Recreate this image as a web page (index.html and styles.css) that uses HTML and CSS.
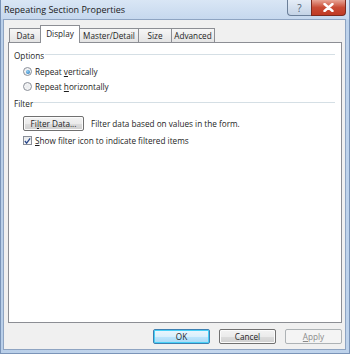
FILE: index.html
```html
<!DOCTYPE html>
<html>
<head>
<meta charset="utf-8">
<link rel="stylesheet" href="styles.css">
</head>
<body>
<div class="window">
  <div class="titlebar">
    <div class="title">Repeating Section Properties</div>
    <div class="caption-buttons">
      <div class="cap-btn help">?</div>
      <div class="cap-btn close">
        <svg width="11" height="9" viewBox="0 0 11 9"><path d="M1.5 1 L9.5 8 M9.5 1 L1.5 8" stroke="#fff" stroke-width="2.4" stroke-linecap="round"/></svg>
      </div>
    </div>
  </div>
  <div class="client">
    <div class="tabs">
      <div class="tab t-data">Data</div>
      <div class="tab active t-display">Display</div>
      <div class="tab t-master">Master/Detail</div>
      <div class="tab t-size">Size</div>
      <div class="tab t-adv">Advanced</div>
    </div>
    <div class="panel">
      <div class="group-head"><span>Options</span><div class="rule"></div></div>
      <div class="option"><span class="radio checked"></span><span>Repeat <u>v</u>ertically</span></div>
      <div class="option"><span class="radio"></span><span>Repeat <u>h</u>orizontally</span></div>
      <div class="group-head filter-head"><span>Filter</span><div class="rule"></div></div>
      <div class="filter-row">
        <div class="btn filter-btn">Fi<u>l</u>ter Data...</div>
        <span>Filter data based on values in the form.</span>
      </div>
      <div class="option check-row">
        <span class="checkbox"><svg width="8" height="8" viewBox="0 0 8 8"><path d="M1 4 L3 6.5 L7 1" stroke="#2c4a8c" stroke-width="1.5" fill="none"/></svg></span>
        <span><u>S</u>how filter icon to indicate filtered items</span>
      </div>
    </div>
    <div class="footer">
      <div class="btn default">OK</div>
      <div class="btn">Cancel</div>
      <div class="btn disabled"><u>A</u>pply</div>
    </div>
  </div>
</div>
</body>
</html>
```
FILE: styles.css
```css
* { box-sizing: border-box; }
html, body { margin: 0; padding: 0; }
body {
  width: 350px;
  height: 354px;
  font-family: "Open Sans", "Noto Sans", sans-serif;
  font-size: 8.2px;
  color: #1e1e1e;
  background: #fff;
}
u { text-decoration: underline; text-underline-offset: 1px; }
.window {
  width: 350px;
  height: 354px;
  display: flex;
  flex-direction: column;
  background: linear-gradient(90deg, #b9cfe9 0%, #c6d8ee 50%, #bdd2eb 100%);
  border-left: 1px solid #7a94b8;
  border-right: 1px solid #7a94b8;
  border-bottom: 1px solid #7a94b8;
  padding: 0 3px 3px 2px;
}
.titlebar {
  height: 19px;
  display: flex;
  justify-content: space-between;
  align-items: flex-start;
  margin: 0 -3px 0 -2px;
  padding: 0 3px 0 2px;
  background: linear-gradient(#d9e6f5, #c6d8ee);
}
.title {
  font-size: 9px;
  line-height: 19px;
  color: #1a1a1a;
  padding-left: 1px;
}
.caption-buttons { display: flex; }
.cap-btn {
  height: 16px;
  display: flex;
  align-items: center;
  justify-content: center;
  border: 1px solid #6b7f99;
  border-top: none;
}
.help {
  width: 24px;
  border-radius: 0 0 0 4px;
  background: linear-gradient(#e5edf7, #c4d3e6);
  color: #4a5a70;
  font-size: 10px;
  border-right: none;
}
.close {
  width: 35px;
  border-radius: 0 0 4px 0;
  background: linear-gradient(#e8a595, #c94c35 50%, #c03a25);
  border-color: #7c2a1e;
}
.client {
  flex: 1;
  background: #f0f0f0;
  border: 1px solid #8ea4c2;
  padding: 5px 3px 0 4px;
  display: flex;
  flex-direction: column;
}
.tabs {
  display: flex;
  height: 17px;
  align-items: flex-end;
  padding-left: 1px;
  position: relative;
  z-index: 1;
}
.tab {
  height: 14px;
  line-height: 13px;
  text-align: center;
  border: 1px solid #8c8e94;
  border-bottom: none;
  border-right: none;
  background: linear-gradient(#f6f6f6, #e4e4e4);
}
.tab:last-child { border-right: 1px solid #8c8e94; }
.t-data { width: 32px; }
.t-display { width: 40px; }
.t-master { width: 58px; }
.t-size { width: 33px; }
.t-adv { width: 44px; }
.tab.active {
  background: #fff;
  border-right: 1px solid #8c8e94;
  margin: 0 -1px -1px -1px;
  line-height: 15px;
  height: 18px;
  position: relative;
}
.tab.active + .tab { border-left: none; margin-left: 1px; }
.panel {
  height: 281px;
  background: #fff;
  border: 1px solid #8c8e94;
  padding: 5px 6px 0 5px;
}
.group-head {
  display: flex;
  align-items: center;
  height: 14px;
}
.group-head .rule {
  flex: 1;
  height: 2px;
  border-top: 1px solid #d5dfe5;
  border-bottom: 1px solid #fff;
  margin-left: 1px;
}
.option {
  display: flex;
  align-items: center;
  height: 15px;
  padding-left: 9px;
  gap: 3px;
}
.group-head + .option { margin-top: 2px; }
.radio {
  width: 9px;
  height: 9px;
  border-radius: 50%;
  border: 1px solid #8a8f98;
  background: radial-gradient(circle, #e9ebee 0%, #f8f8f8 100%);
  display: inline-block;
  position: relative;
}
.radio.checked::after {
  content: "";
  position: absolute;
  left: 1.5px;
  top: 1.5px;
  width: 4px;
  height: 4px;
  border-radius: 50%;
  background: radial-gradient(circle at 40% 35%, #8fd0f4, #1d6db5);
}
.filter-head { margin-top: 2px; }
.filter-row {
  display: flex;
  align-items: center;
  gap: 7px;
  padding-left: 9px;
  margin-top: 5px;
  height: 16px;
}
.btn {
  height: 15px;
  border: 1px solid #707070;
  border-radius: 2px;
  background: linear-gradient(#f3f3f3 0%, #ebebeb 50%, #dddddd 51%, #cfcfcf 100%);
  display: flex;
  align-items: center;
  justify-content: center;
  box-shadow: inset 0 0 0 1px #fbfbfb;
}
.filter-btn { width: 61px; }
.check-row { margin-top: 2px; }
.checkbox {
  width: 9px;
  height: 9px;
  border: 1px solid #8a8f98;
  background: linear-gradient(#e8eaec, #fafafa);
  display: inline-flex;
  align-items: center;
  justify-content: center;
}
.footer {
  display: flex;
  justify-content: flex-end;
  gap: 9px;
  padding-top: 6px;
}
.footer .btn { width: 57px; }
.btn.default {
  border-color: #3c7fb1;
  background: linear-gradient(#eaf6fd 0%, #d9f0fc 50%, #bee6fd 51%, #a7d9f5 100%);
  box-shadow: inset 0 0 0 1px #48d0f7;
}
.btn.disabled {
  border-color: #adb2b5;
  background: #f4f4f4;
  color: #8a8a8a;
  box-shadow: none;
}
```
